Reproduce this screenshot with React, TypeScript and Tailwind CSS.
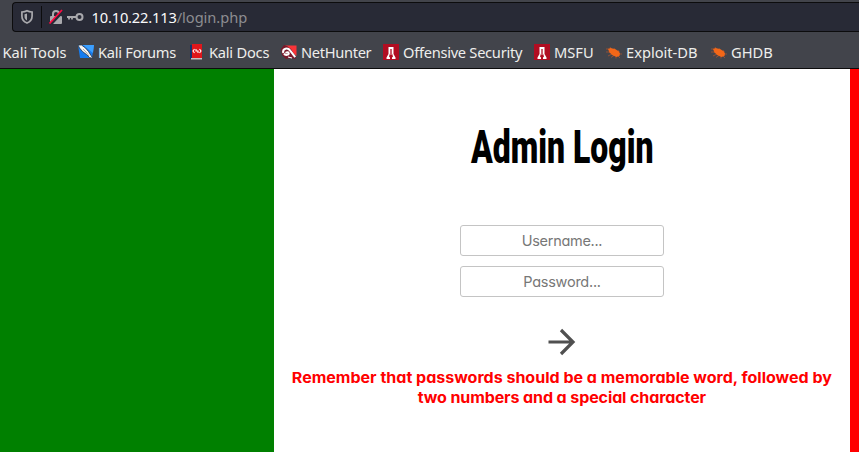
import type { ReactNode } from "react";

function ForumsIcon() {
  return (
    <svg width="16" height="16" viewBox="0 0 16 16">
      <path d="M0 1h16l-2 13H2z" fill="#167cf0" />
      <path d="M5 1h11l-1 8z" fill="#3da0ff" />
      <path d="M0 1l3.5 0 4 3 3 3.5 2.5 4 2 3-3.5-1-3-3-4-3-3-3.5z" fill="#f4f4f4" stroke="#263245" strokeWidth=".8" />
      <path d="M5 5l3 3 3 4" fill="none" stroke="#777" strokeWidth=".6" />
    </svg>
  );
}

function DocsIcon() {
  return (
    <svg width="16" height="16" viewBox="0 0 16 16">
      <path d="M1 1h2v14H1z" fill="#17336c" />
      <path d="M3 0h10v14H3z" fill="#e0161b" />
      <path d="M2 14h11v1.5H2z" fill="#c8bfc2" />
      <path d="M5.5 5L4 7l1.5 2M10.5 5L12 7l-1.5 2M7 5v2h2v2" fill="none" stroke="white" strokeWidth="1.1" />
    </svg>
  );
}

function HunterIcon() {
  return (
    <svg width="16" height="16" viewBox="0 0 16 16">
      <path d="M4 1.5h11.5V12z" fill="#fa3438" />
      <path d="M0 5l3-4 3 1 4 3 3 5 2 5-5-1-5 1-4-4z" fill="#79192a" />
      <path d="M2.2 9C1.3 4.2 6.8 3.2 9.2 6.6l5 6.6M3 9.5c1.3 2.4 5.3 1.4 4.7-.4-.5-1-2-.8-3.2-.3" fill="none" stroke="#fff" strokeWidth="2" />
      <path d="M7 13l4 1" fill="none" stroke="#fff" strokeWidth="1.2" />
    </svg>
  );
}

function OffsecIcon() {
  return (
    <svg width="16" height="16" viewBox="0 0 16 16">
      <path d="M0 0h16v16H0z" fill="#b10d22" />
      <path d="M5.5 3h5v7l2 3.5V15H9v-1.5l1-1-1-3V5H7v4.5l-1 3 1 1V15H3.5v-1.5l2-3.5z" fill="#fff" />
      <path d="M7.3 5h1.4v6H7.3z" fill="#d98590" />
    </svg>
  );
}

function BugIcon() {
  return (
    <svg width="16" height="16" viewBox="0 0 16 16">
      <path d="M0 5h3M0 8h5M4 3l2 3M8 4l1 2M12 6l1 2M16 10h-4M2 12l4-2M5 13.5l3-2M10 14.5v-3M14 14l-3-3" fill="none" stroke="#a65331" strokeWidth=".8" />
      <path d="M2 5L4.5 4l5 1.2 3 2 1.5 2-.5 2.8-3 1-4-1.8-3-2.7z" fill="#f36718" />
    </svg>
  );
}

function Bookmark({ icon, children, className }: { icon?: ReactNode; children: ReactNode; className: string }) {
  return (
    <div className={`flex h-5 shrink-0 items-center gap-1 ${className}`}>
      {icon}
      <span className="whitespace-nowrap">{children}</span>
    </div>
  );
}

function Browser() {
  return (
    <header className="h-[69px] border-b border-[#0c0c0d] bg-[#42444b] pt-[2px] font-['Noto_Sans',sans-serif]">
      <div className="ml-3 flex h-[30px] items-center rounded-l-[4px] border border-r-0 border-[#0c0c0d] bg-[#282a36]">
        <svg className="ml-[7px] shrink-0" width="14" height="16" viewBox="0 0 14 16">
          <path d="M7 1.8C5 2.9 3.2 3 1.9 3v4c0 3.8 2 5.8 5.1 7 3.1-1.2 5.1-3.2 5.1-7V3C10.8 3 9 2.9 7 1.8z" fill="none" stroke="#a9a9ad" strokeWidth="1.7" />
          <path d="M7 4.5v7C5.3 10.6 4.5 9.5 4.5 7V5.2z" fill="#a9a9ad" />
        </svg>
        <div className="ml-[7px] h-[22px] w-px bg-[#0c0c0d]" />
        <svg className="ml-[6px] shrink-0" width="16" height="16" viewBox="0 0 16 16">
          <path d="M5 7V5a3 3 0 016 0v2" fill="none" stroke="#a9a9ad" strokeWidth="2" />
          <rect x="2" y="7" width="12" height="8" rx="1" fill="#a9a9ad" />
          <path d="M2.5 15.5L15 2" stroke="#282a36" strokeWidth="3" />
          <path d="M1.5 14.5L14 1" stroke="#ff0a41" strokeWidth="1.8" />
        </svg>
        <svg className="ml-[3px] shrink-0" width="17" height="16" viewBox="0 0 17 16">
          <circle cx="12.5" cy="8" r="3" fill="none" stroke="#a9a9ad" strokeWidth="2" />
          <path d="M0 8h9M2 8v2.5M5 8v2.5" fill="none" stroke="#a9a9ad" strokeWidth="1.8" />
        </svg>
        <span className="ml-[7.5px] whitespace-nowrap text-[14.67px] leading-5 tracking-[-0.17px] text-[#f9f9fa]">10.10.22.113<span className="tracking-[-0.05px] text-[#8d8d91]">/login.php</span></span>
      </div>
      <nav className="mt-[10px] flex h-5 items-center pl-[2.6px] text-[14.67px] leading-5 text-[#eeeeec]">
        <Bookmark className="w-[75.4px] tracking-[-0.05px]">Kali Tools</Bookmark>
        <Bookmark className="w-[111px] tracking-[-0.27px]" icon={<ForumsIcon />}>Kali Forums</Bookmark>
        <Bookmark className="w-[92px] tracking-[-0.23px]" icon={<DocsIcon />}>Kali Docs</Bookmark>
        <Bookmark className="w-[102px] tracking-[-0.33px]" icon={<HunterIcon />}>NetHunter</Bookmark>
        <Bookmark className="w-[151px] tracking-[-0.28px]" icon={<OffsecIcon />}>Offensive Security</Bookmark>
        <Bookmark className="w-[72px]" icon={<OffsecIcon />}>MSFU</Bookmark>
        <Bookmark className="w-[105px]" icon={<BugIcon />}>Exploit-DB</Bookmark>
        <Bookmark className="w-20" icon={<BugIcon />}>GHDB</Bookmark>
      </nav>
    </header>
  );
}

export default function App() {
  return (
    <div className="h-[452px] w-[859px] overflow-hidden">
      <Browser />
      <div className="flex h-[383px] bg-[#008000]">
        <div className="w-[274px] shrink-0" />
        <main className="flex w-[576px] shrink-0 flex-col items-center bg-white font-['Inter',sans-serif] [font-feature-settings:'cv11']">
          <h1 className="mt-[50px] h-14 origin-center scale-x-[0.68] whitespace-nowrap font-['Roboto',sans-serif] text-[47px] font-black leading-[56px] text-black">Admin Login</h1>
          <input aria-label="Username" placeholder="Username..." className="mt-[50px] h-[31px] w-[204px] rounded-[3px] border border-[#c4c4c4] text-center text-[14.5px] tracking-[-0.3px] placeholder:text-[#777777]" />
          <input aria-label="Password" type="password" placeholder="Password..." className="mt-[10px] h-[31px] w-[204px] rounded-[3px] border border-[#c4c4c4] text-center text-[14.5px] tracking-[-0.25px] placeholder:text-[#777777]" />
          <button aria-label="Sign in" className="mt-7 h-[34px] w-[34px]">
            <svg width="34" height="34" viewBox="0 0 34 34">
              <path d="M3.5 17H28M16 5l12 12-12 12" fill="none" stroke="#505050" strokeWidth="3.2" />
            </svg>
          </button>
          <p className="mt-[9px] scale-x-[1.068] whitespace-nowrap text-center text-[15px] font-bold leading-5 text-[#ff0000]">Remember that passwords should be a memorable word, followed by<br /><span className="tracking-[-0.1px]">two numbers and a special character</span></p>
        </main>
        <div className="flex-1 bg-[#ff0000]" />
      </div>
    </div>
  );
}
